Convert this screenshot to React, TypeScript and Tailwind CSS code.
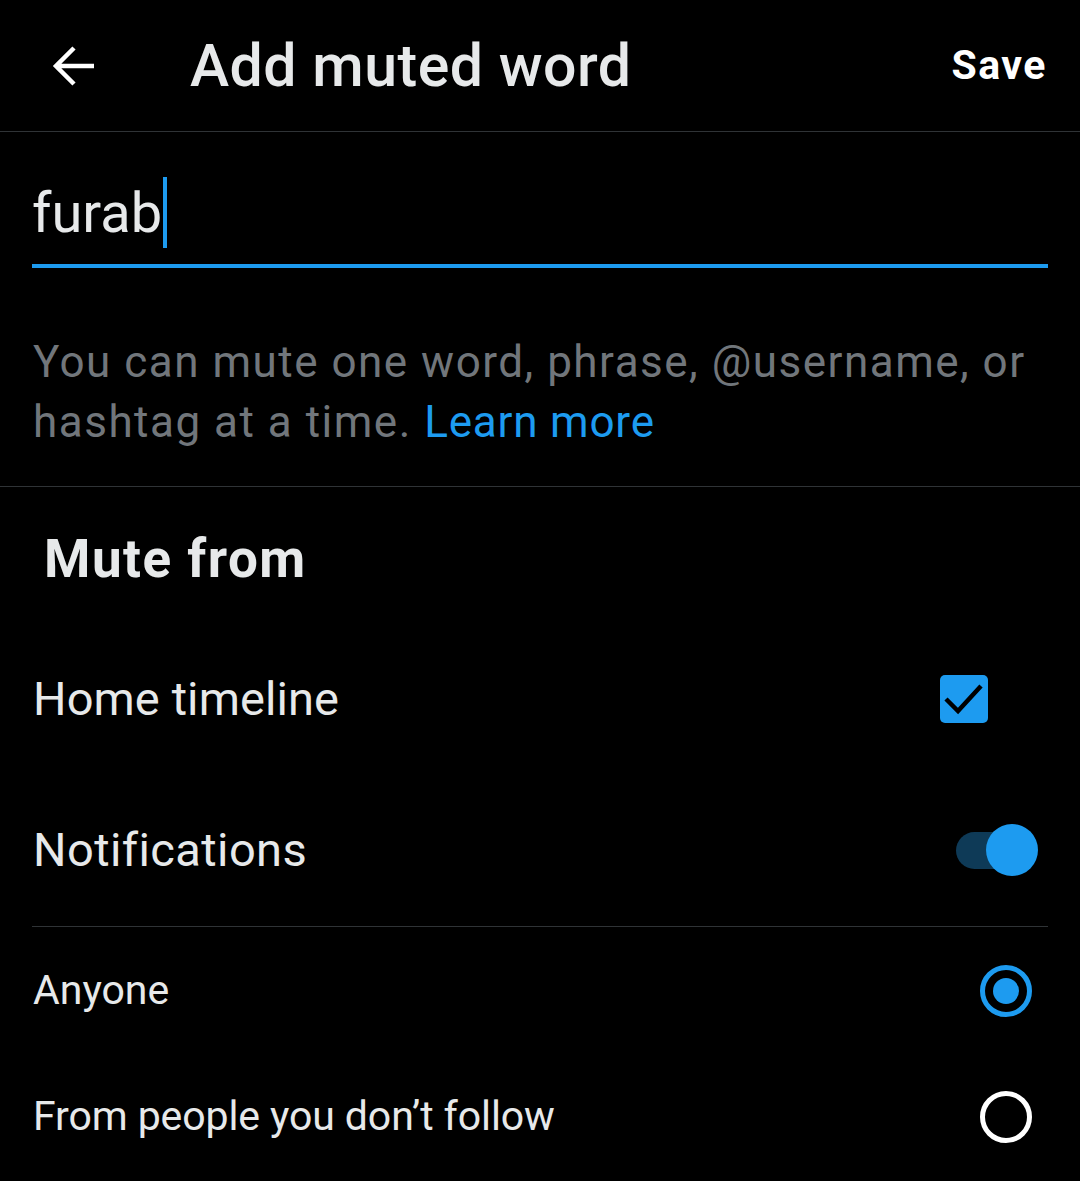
import React from "react";

export default function App() {
  const font = { fontFamily: "Roboto, 'Noto Sans', sans-serif" };
  return (
    <div className="w-[1080px] h-[1181px] bg-black text-[#e7e9ea] overflow-hidden" style={font}>
      {/* Header */}
      <div className="h-[132px] flex items-center border-b border-[#2f3336] pl-[52px] pr-[33px]">
        <svg width="44" height="44" viewBox="0 0 44 44" className="shrink-0">
          <path d="M42 22H5M22 4L4 22l18 18" stroke="#ffffff" strokeWidth="4.5" fill="none" strokeLinejoin="miter" />
        </svg>
        <div className="ml-[94px] text-[59px] font-medium leading-none tracking-[0.5px]">Add muted word</div>
        <div className="ml-auto text-[41px] font-bold text-white leading-none tracking-[1.5px]">Save</div>
      </div>

      {/* Input */}
      <div className="px-[32px] pt-[45px]">
        <div className="flex items-center h-[71px]">
          <span className="text-[56px] leading-none text-[#e7e9ea]">furab</span>
          <span className="w-[4px] h-[71px] bg-[#1d9bf0] ml-[1px]" />
        </div>
        <div className="mt-[16px] h-[4px] bg-[#1d9bf0]" />
      </div>

      {/* Description */}
      <div className="px-[33px] pt-[64px] pb-[34px] border-b border-[#2f3336] text-[44px] leading-[60px] text-[#71767b] tracking-[1.5px]">
        You can mute one word, phrase, @username, or hashtag at a time.{" "}
        <span className="text-[#1d9bf0] tracking-[0.8px]">Learn more</span>
      </div>

      {/* Mute from */}
      <div className="pl-[44px] pt-[42px] pb-[35px] text-[53px] font-bold leading-[60px] tracking-[1.5px]">Mute from</div>

      {/* Home timeline */}
      <div className="h-[150px] flex items-center pl-[33px] pr-[92px]">
        <span className="text-[47px] tracking-[0.1px]">Home timeline</span>
        <div className="ml-auto w-[48px] h-[48px] rounded-[5px] bg-[#1d9bf0]">
          <svg width="48" height="48" viewBox="0 0 48 48">
            <path d="M6 24l12 12 23-25" stroke="#000" strokeWidth="4.5" fill="none" />
          </svg>
        </div>
      </div>

      {/* Notifications */}
      <div className="h-[152px] flex items-center pl-[33px] pr-[42px]">
        <span className="text-[47px] tracking-[0.4px]">Notifications</span>
        <div className="ml-auto relative w-[82px] h-[52px] flex items-center">
          <div className="w-[72px] h-[37px] rounded-full bg-[#0e3a57]" />
          <div className="absolute right-0 top-0 w-[52px] h-[52px] rounded-full bg-[#1d9bf0]" />
        </div>
      </div>

      {/* Divider */}
      <div className="mx-[32px] h-px bg-[#2f3336]" />

      {/* Anyone */}
      <div className="h-[128px] flex items-center pl-[33px] pr-[48px]">
        <span className="text-[41px]">Anyone</span>
        <div className="ml-auto w-[52px] h-[52px] rounded-full border-[5px] border-[#1d9bf0] flex items-center justify-center">
          <div className="w-[26px] h-[26px] rounded-full bg-[#1d9bf0]" />
        </div>
      </div>

      {/* From people */}
      <div className="h-[124px] flex items-center pl-[33px] pr-[48px]">
        <span className="text-[41px] tracking-[-0.1px]">From people you don’t follow</span>
        <div className="ml-auto w-[52px] h-[52px] rounded-full border-[5px] border-white" />
      </div>
    </div>
  );
}
